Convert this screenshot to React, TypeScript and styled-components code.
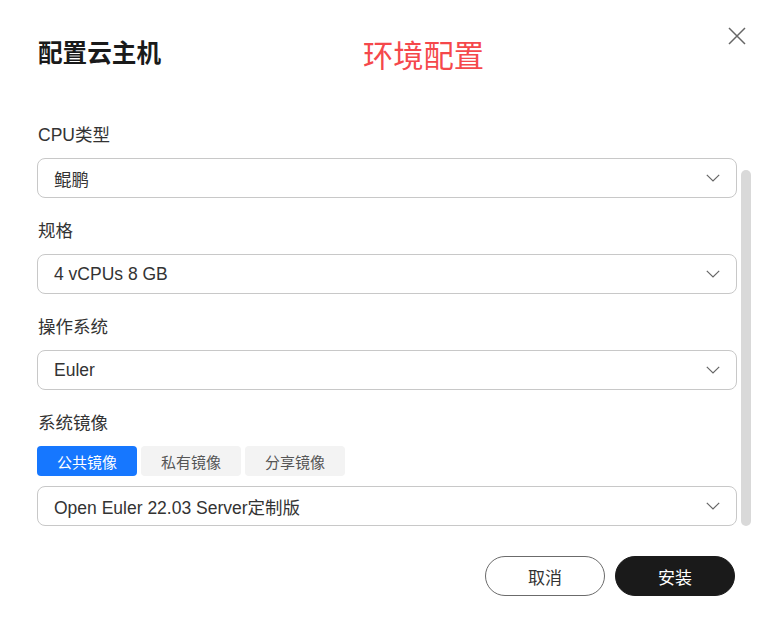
import React from 'react';
import styled, { createGlobalStyle } from 'styled-components';

// ─── Global ───────────────────────────────────────────────────────────────────

const GlobalStyle = createGlobalStyle`
  html, body {
    margin: 0;
    padding: 0;
    background: #ffffff;
  }
  body {
    font-family: "Liberation Sans", "Noto Sans CJK SC", sans-serif;
    color: #333;
  }
  * { box-sizing: border-box; }
`;

// ─── Styled ───────────────────────────────────────────────────────────────────

const Dialog = styled.div`
  width: 773px;
  height: 631px;
  background: #fff;
  border-radius: 4px;
  position: relative;
  padding: 38px 21px 0 37px;
  display: flex;
  flex-direction: column;
`;

const Header = styled.div`
  display: flex;
  align-items: center;
  height: 32px;
`;

const Title = styled.h2`
  margin: 0 0 0 1px;
  font-size: 24.6px;
  font-weight: 700;
  color: #1a1a1a;
  line-height: 32px;
`;

const Tag = styled.span`
  margin-left: 202px;
  margin-top: 6px;
  font-size: 30.3px;
  font-weight: 400;
  color: #f5484b;
  line-height: 32px;
`;

const CloseButton = styled.button`
  position: absolute;
  top: 26px;
  right: 26px;
  width: 20px;
  height: 20px;
  padding: 0;
  border: none;
  background: transparent;
  cursor: pointer;
  display: flex;
  align-items: center;
  justify-content: center;
`;

const Body = styled.div`
  display: flex;
  gap: 4px;
  margin-top: 51px;
`;

const Fields = styled.div`
  width: 700px;
  display: flex;
  flex-direction: column;
  gap: 19px;
`;

const Scrollbar = styled.div`
  width: 10px;
  margin-top: 49px;
  border-radius: 5px;
  background: #d9d9d9;
`;

const Field = styled.div`
  display: flex;
  flex-direction: column;
  gap: 11px;
`;

const Label = styled.label`
  padding: 2px 0 0 1px;
  font-size: 17.5px;
  line-height: 24px;
  color: #333;
`;

const SelectBox = styled.div`
  height: 40px;
  border: 1px solid #c8c8c8;
  border-radius: 8px;
  padding: 0 16px;
  display: flex;
  align-items: center;
  justify-content: space-between;
  font-size: 17.5px;
  color: #333;
`;

const TabRow = styled.div`
  display: flex;
  gap: 4px;
  margin-bottom: -1px;
`;

const Tab = styled.button<{ active?: boolean }>`
  width: 100px;
  height: 30px;
  padding: 0;
  border: none;
  border-radius: 4px;
  font-family: inherit;
  font-size: 15px;
  background: ${({ active }) => (active ? '#1677ff' : '#f3f3f3')};
  color: ${({ active }) => (active ? '#fff' : '#555')};
  cursor: pointer;
`;

const Footer = styled.div`
  display: flex;
  justify-content: flex-end;
  gap: 10px;
  margin-top: 30px;
  padding-right: 17px;
`;

const Button = styled.button<{ primary?: boolean }>`
  width: 120px;
  height: 40px;
  border-radius: 20px;
  font-family: inherit;
  font-size: 17px;
  cursor: pointer;
  border: 1px solid ${({ primary }) => (primary ? '#1a1a1a' : '#6b6b6b')};
  background: ${({ primary }) => (primary ? '#1a1a1a' : '#fff')};
  color: ${({ primary }) => (primary ? '#fff' : '#333')};
`;

// ─── Icons ────────────────────────────────────────────────────────────────────

const Chevron = () => (
  <svg width="14" height="8" viewBox="0 0 14 8" fill="none">
    <path d="M0.8 0.8 L7 7 L13.2 0.8" stroke="#666" strokeWidth="1.2" />
  </svg>
);

const CloseIcon = () => (
  <svg width="18" height="18" viewBox="0 0 18 18" fill="none">
    <path d="M1 1 L17 17 M17 1 L1 17" stroke="#666" strokeWidth="1.5" />
  </svg>
);

// ─── Component ────────────────────────────────────────────────────────────────

const Select: React.FC<{ value: string }> = ({ value }) => (
  <SelectBox>
    <span>{value}</span>
    <Chevron />
  </SelectBox>
);

const App: React.FC = () => (
  <>
    <GlobalStyle />
    <Dialog>
      <Header>
        <Title>配置云主机</Title>
        <Tag>环境配置</Tag>
      </Header>
      <CloseButton aria-label="关闭">
        <CloseIcon />
      </CloseButton>

      <Body>
        <Fields>
          <Field>
            <Label>CPU类型</Label>
            <Select value="鲲鹏" />
          </Field>
          <Field>
            <Label>规格</Label>
            <Select value="4 vCPUs 8 GB" />
          </Field>
          <Field>
            <Label>操作系统</Label>
            <Select value="Euler" />
          </Field>
          <Field>
            <Label>系统镜像</Label>
            <TabRow>
              <Tab active>公共镜像</Tab>
              <Tab>私有镜像</Tab>
              <Tab>分享镜像</Tab>
            </TabRow>
            <Select value="Open Euler 22.03 Server定制版" />
          </Field>
        </Fields>
        <Scrollbar />
      </Body>

      <Footer>
        <Button>取消</Button>
        <Button primary>安装</Button>
      </Footer>
    </Dialog>
  </>
);

export default App;
